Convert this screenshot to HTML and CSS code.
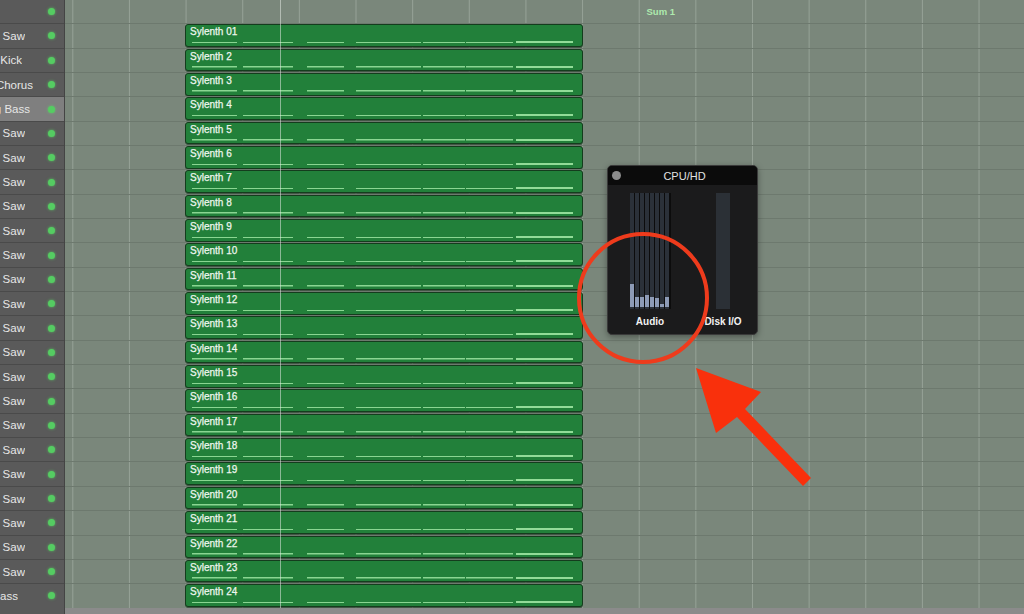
FILE: index.html
```html
<!DOCTYPE html>
<html>
<head>
<meta charset="utf-8">
<title>Logic Tracks – CPU/HD</title>
<link rel="stylesheet" href="styles.css">
</head>
<body>
<div class="app">
  <aside class="sidebar">
    <div class="srow top"><span class="dot"></span></div>
    <div class="srow"><span class="lbl w-saw">Lead 3 Saw</span><span class="dot"></span></div>
    <div class="srow"><span class="lbl w-kick">Big Kick</span><span class="dot"></span></div>
    <div class="srow"><span class="lbl w-chorus">Pad Chorus</span><span class="dot"></span></div>
    <div class="srow sel"><span class="lbl w-bass">Long Bass</span><span class="dot"></span></div>
    <div class="srow"><span class="lbl w-saw">Lead 3 Saw</span><span class="dot"></span></div>
    <div class="srow"><span class="lbl w-saw">Lead 3 Saw</span><span class="dot"></span></div>
    <div class="srow"><span class="lbl w-saw">Lead 3 Saw</span><span class="dot"></span></div>
    <div class="srow"><span class="lbl w-saw">Lead 3 Saw</span><span class="dot"></span></div>
    <div class="srow"><span class="lbl w-saw">Lead 3 Saw</span><span class="dot"></span></div>
    <div class="srow"><span class="lbl w-saw">Lead 3 Saw</span><span class="dot"></span></div>
    <div class="srow"><span class="lbl w-saw">Lead 3 Saw</span><span class="dot"></span></div>
    <div class="srow"><span class="lbl w-saw">Lead 3 Saw</span><span class="dot"></span></div>
    <div class="srow"><span class="lbl w-saw">Lead 3 Saw</span><span class="dot"></span></div>
    <div class="srow"><span class="lbl w-saw">Lead 3 Saw</span><span class="dot"></span></div>
    <div class="srow"><span class="lbl w-saw">Lead 3 Saw</span><span class="dot"></span></div>
    <div class="srow"><span class="lbl w-saw">Lead 3 Saw</span><span class="dot"></span></div>
    <div class="srow"><span class="lbl w-saw">Lead 3 Saw</span><span class="dot"></span></div>
    <div class="srow"><span class="lbl w-saw">Lead 3 Saw</span><span class="dot"></span></div>
    <div class="srow"><span class="lbl w-saw">Lead 3 Saw</span><span class="dot"></span></div>
    <div class="srow"><span class="lbl w-saw">Lead 3 Saw</span><span class="dot"></span></div>
    <div class="srow"><span class="lbl w-saw">Lead 3 Saw</span><span class="dot"></span></div>
    <div class="srow"><span class="lbl w-saw">Lead 3 Saw</span><span class="dot"></span></div>
    <div class="srow"><span class="lbl w-saw">Lead 3 Saw</span><span class="dot"></span></div>
    <div class="srow"><span class="lbl w-ass">Sub Bass</span><span class="dot"></span></div>
  </aside>

  <main class="tracks">
    <div class="trow top"><span class="sum">Sum 1</span></div>
    <div class="trow"><div class="region"><span class="rname">Sylenth 01</span><div class="notes"></div></div></div>
    <div class="trow"><div class="region"><span class="rname">Sylenth 2</span><div class="notes"></div></div></div>
    <div class="trow"><div class="region"><span class="rname">Sylenth 3</span><div class="notes"></div></div></div>
    <div class="trow"><div class="region"><span class="rname">Sylenth 4</span><div class="notes"></div></div></div>
    <div class="trow"><div class="region"><span class="rname">Sylenth 5</span><div class="notes"></div></div></div>
    <div class="trow"><div class="region"><span class="rname">Sylenth 6</span><div class="notes"></div></div></div>
    <div class="trow"><div class="region"><span class="rname">Sylenth 7</span><div class="notes"></div></div></div>
    <div class="trow"><div class="region"><span class="rname">Sylenth 8</span><div class="notes"></div></div></div>
    <div class="trow"><div class="region"><span class="rname">Sylenth 9</span><div class="notes"></div></div></div>
    <div class="trow"><div class="region"><span class="rname">Sylenth 10</span><div class="notes"></div></div></div>
    <div class="trow"><div class="region"><span class="rname">Sylenth 11</span><div class="notes"></div></div></div>
    <div class="trow"><div class="region"><span class="rname">Sylenth 12</span><div class="notes"></div></div></div>
    <div class="trow"><div class="region"><span class="rname">Sylenth 13</span><div class="notes"></div></div></div>
    <div class="trow"><div class="region"><span class="rname">Sylenth 14</span><div class="notes"></div></div></div>
    <div class="trow"><div class="region"><span class="rname">Sylenth 15</span><div class="notes"></div></div></div>
    <div class="trow"><div class="region"><span class="rname">Sylenth 16</span><div class="notes"></div></div></div>
    <div class="trow"><div class="region"><span class="rname">Sylenth 17</span><div class="notes"></div></div></div>
    <div class="trow"><div class="region"><span class="rname">Sylenth 18</span><div class="notes"></div></div></div>
    <div class="trow"><div class="region"><span class="rname">Sylenth 19</span><div class="notes"></div></div></div>
    <div class="trow"><div class="region"><span class="rname">Sylenth 20</span><div class="notes"></div></div></div>
    <div class="trow"><div class="region"><span class="rname">Sylenth 21</span><div class="notes"></div></div></div>
    <div class="trow"><div class="region"><span class="rname">Sylenth 22</span><div class="notes"></div></div></div>
    <div class="trow"><div class="region"><span class="rname">Sylenth 23</span><div class="notes"></div></div></div>
    <div class="trow"><div class="region"><span class="rname">Sylenth 24</span><div class="notes"></div></div></div>
    <div class="bottombar"></div>
    <div class="playhead"></div>
  </main>

  <section class="cpuwin">
    <header class="cpu-title"><span class="close"></span><span class="cpu-name">CPU/HD</span></header>
    <div class="cpu-body">
      <div class="meter-col">
        <div class="audio-meter">
          <div class="core"><div class="fill" style="height:23px"></div></div>
          <div class="core"><div class="fill" style="height:10px"></div></div>
          <div class="core"><div class="fill" style="height:10px"></div></div>
          <div class="core"><div class="fill" style="height:12px"></div></div>
          <div class="core"><div class="fill" style="height:10px"></div></div>
          <div class="core"><div class="fill" style="height:9px"></div></div>
          <div class="core"><div class="fill" style="height:3px"></div></div>
          <div class="core"><div class="fill" style="height:10px"></div></div>
        </div>
        <span class="mlabel">Audio</span>
      </div>
      <div class="meter-col">
        <div class="disk-meter"></div>
        <span class="mlabel">Disk I/O</span>
      </div>
    </div>
  </section>

  <svg class="annot" width="1024" height="614" viewBox="0 0 1024 614">
    <circle cx="643" cy="298" r="64" fill="none" stroke="#ee3b1c" stroke-width="4"/>
    <polygon fill="#f9300c" points="696,368 761,392 745,409 811,478 803,486 737,417 716,433"/>
  </svg>
</div>
</body>
</html>
```
FILE: styles.css
```css
* { box-sizing: border-box; }
html, body { margin: 0; padding: 0; }
body {
  width: 1024px;
  height: 614px;
  overflow: hidden;
  font-family: "Liberation Sans", Arial, sans-serif;
  background: #7a877b;
}
.app {
  position: relative;
  display: flex;
  width: 1024px;
  height: 614px;
}

/* ---------- sidebar ---------- */
.sidebar {
  width: 65px;
  flex: none;
  height: 614px;
  background: #5a5a5a;
  border-right: 1px solid #444;
  display: flex;
  flex-direction: column;
}
.srow {
  height: 24.35px;
  flex: none;
  display: flex;
  align-items: center;
  border-top: 1px solid #4a4a4a;
  color: #e6e6e6;
  font-size: 11.5px;
}
.srow.top { height: 23.3px; border-top: none; }
.srow.sel { background: #7f7f7f; }
.lbl {
  display: flex;
  justify-content: flex-end;
  white-space: nowrap;
  overflow: hidden;
}
.w-saw { width: 25px; }
.w-kick { width: 22px; }
.w-chorus { width: 33px; }
.w-bass { width: 30px; }
.w-ass { width: 18px; }
.dot {
  margin-left: auto;
  margin-right: 9.5px;
  width: 7px;
  height: 7px;
  border-radius: 50%;
  background: #55cc62;
  box-shadow: 0 0 3px rgba(90, 230, 100, 0.7);
}

/* ---------- tracks ---------- */
.tracks {
  position: relative;
  flex: 1;
  height: 614px;
  display: flex;
  flex-direction: column;
  background-color: #7a877b;
  background-image: linear-gradient(90deg, #96a297 0 1px, transparent 1px);
  background-size: 56.65px 100%;
  background-position: 7.3px 0;
}
.trow {
  height: 24.35px;
  flex: none;
  border-top: 1px solid #6d796e;
  padding-left: 120px;
}
.trow.top {
  height: 23.3px;
  border-top: none;
  padding-left: 581.5px;
  display: flex;
  align-items: center;
}
.sum {
  font-size: 9.5px;
  font-weight: bold;
  color: #aeeaae;
  margin-top: -1px;
}
.region {
  width: 398px;
  height: 22.6px;
  background: #22803a;
  border: 1px solid #143c1d;
  border-radius: 3px;
  box-shadow: 0 1px 0 rgba(10, 40, 15, 0.5);
  display: flex;
  flex-direction: column;
}
.rname {
  font-size: 10px;
  line-height: 12px;
  padding: 1px 0 0 4px;
  color: #eef6ee;
  -webkit-text-stroke: 0.25px #eef6ee;
  white-space: nowrap;
}
.notes {
  margin-top: 3px;
  height: 2px;
  background-image:
    linear-gradient(90deg,
      transparent 6px, #8ad692 6px, #8ad692 51px, transparent 51px,
      transparent 57px, #8ad692 57px, #8ad692 107px, transparent 107px,
      transparent 121px, #8ad692 121px, #8ad692 158px, transparent 158px,
      transparent 170px, #8ad692 170px, #8ad692 235px, transparent 235px,
      transparent 237px, #8ad692 237px, #8ad692 279px, transparent 279px,
      transparent 280px, #8ad692 280px, #8ad692 327px, transparent 327px),
    linear-gradient(90deg,
      transparent 330px, #92dc98 330px, #92dc98 387px, transparent 387px);
  background-size: 100% 1.5px, 100% 2px;
  background-position: 0 100%, 0 0;
  background-repeat: no-repeat;
}
.bottombar {
  flex: 1;
  background: #8b8b8b;
}
.playhead {
  position: absolute;
  left: 215px;
  top: 0;
  width: 1px;
  height: 607.7px;
  background: rgba(225, 232, 225, 0.55);
}

/* ---------- CPU window ---------- */
.cpuwin {
  position: absolute;
  left: 607px;
  top: 165px;
  width: 151px;
  height: 170px;
  background: #1b1b1c;
  border: 1px solid #3a3a3a;
  border-radius: 5px;
  overflow: hidden;
  display: flex;
  flex-direction: column;
  box-shadow: 0 2px 6px rgba(0, 0, 0, 0.35);
}
.cpu-title {
  height: 19px;
  flex: none;
  background: #0b0b0b;
  display: flex;
  align-items: center;
}
.close {
  width: 9px;
  height: 9px;
  border-radius: 50%;
  background: #8c8c8c;
  margin-left: 4px;
}
.cpu-name {
  flex: 1;
  text-align: center;
  color: #e2e2e2;
  font-size: 11px;
  margin-right: 9px;
}
.cpu-body {
  display: grid;
  grid-template-columns: 84px 62px;
  padding-top: 8px;
}
.meter-col {
  display: flex;
  flex-direction: column;
  align-items: center;
}
.audio-meter {
  display: flex;
  width: 41px;
  height: 116px;
  background: #0c0c0c;
  margin-left: 1px;
}
.core {
  width: 5px;
  height: 116px;
  border-right: 1px solid #0c0c0c;
  background: #2b3139;
  display: flex;
  flex-direction: column;
  justify-content: flex-end;
  padding-bottom: 2px;
}
.fill {
  background: #8d9bb6;
}
.disk-meter {
  width: 14px;
  height: 116px;
  background: #2b3036;
}
.mlabel {
  margin-top: 7px;
  color: #f2f2f2;
  font-size: 10px;
  font-weight: bold;
  white-space: nowrap;
}

/* ---------- annotation ---------- */
.annot {
  position: absolute;
  left: 0;
  top: 0;
  pointer-events: none;
}
```
